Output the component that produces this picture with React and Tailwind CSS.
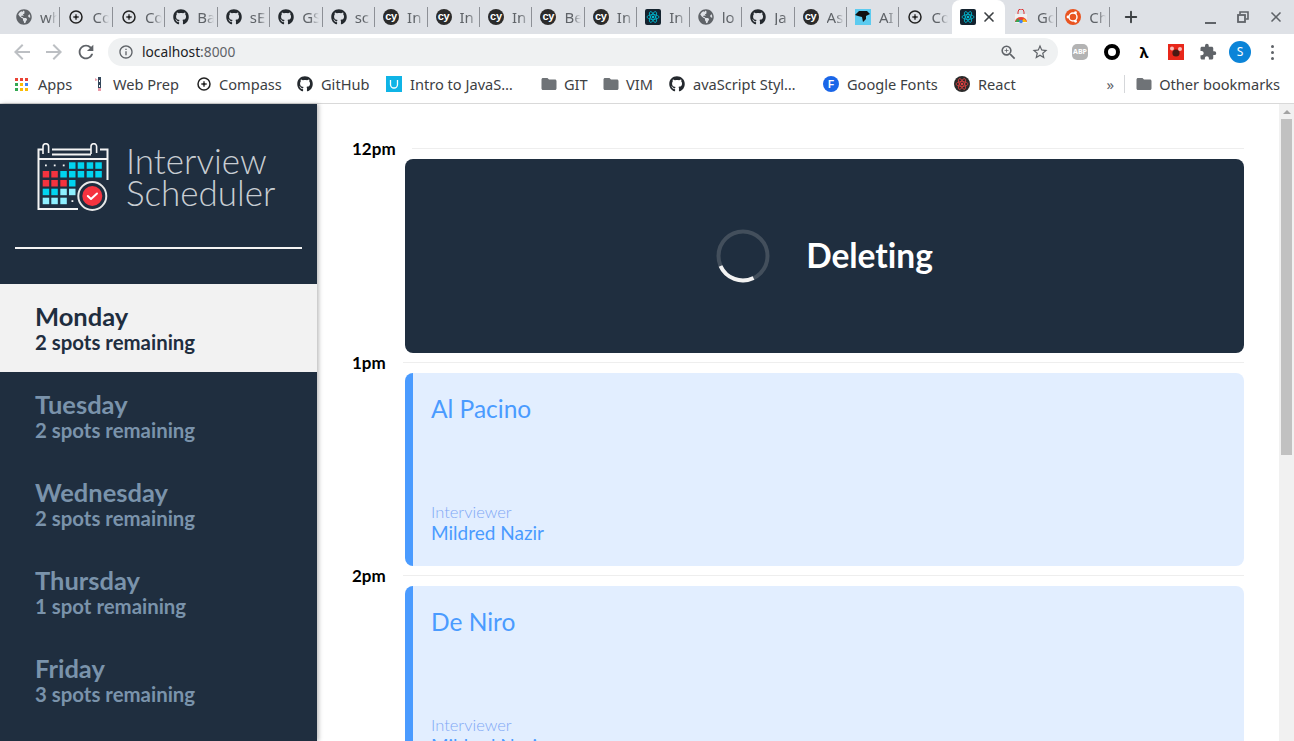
import React from "react";
import { FaGithub, FaGlobeAmericas } from "react-icons/fa";
import { MdArrowBack, MdArrowForward, MdRefresh, MdInfoOutline, MdStarBorder, MdZoomIn, MdExtension, MdFolder } from "react-icons/md";
import { FiX, FiPlus } from "react-icons/fi";

const GlobeIcon = () => <FaGlobeAmericas className="w-4 h-4 text-[#5f6368] shrink-0" />;
const GithubIcon = () => <FaGithub className="w-4 h-4 text-[#24292e] shrink-0" />;
const FolderIcon = () => <MdFolder className="w-[18px] h-[18px] -ml-px -mr-[2px] text-[#6f7377] shrink-0" />;

const CompassIcon = () => (
  <svg viewBox="0 0 16 16" className="w-4 h-4 shrink-0">
    <circle cx="8" cy="8" r="6" fill="none" stroke="#222" strokeWidth="1.5" />
    <path d="M8 5v6M5 8h6" stroke="#222" strokeWidth="1" />
    <circle cx="8" cy="8" r="1.6" fill="#222" />
  </svg>
);

const CypressIcon = () => (
  <span className="w-4 h-4 rounded-full bg-[#2b2b2b] text-white shrink-0 flex items-center justify-center text-[11px] tracking-tight leading-none font-bold font-['Liberation_Sans',sans-serif] pb-[2px]">
    cy
  </span>
);

const ReactIcon = ({ bg = "#14232f", color = "#00bcd4", round = false }) => (
  <svg viewBox="0 0 16 16" className="w-4 h-4 shrink-0">
    <rect width="16" height="16" rx={round ? 8 : 2} fill={bg} />
    <g fill="none" stroke={color} strokeWidth="0.8">
      <ellipse cx="8" cy="8" rx="6" ry="2.4" />
      <ellipse cx="8" cy="8" rx="6" ry="2.4" transform="rotate(60 8 8)" />
      <ellipse cx="8" cy="8" rx="6" ry="2.4" transform="rotate(120 8 8)" />
    </g>
    <circle cx="8" cy="8" r="1.3" fill={color} />
  </svg>
);

const AiIcon = () => (
  <svg viewBox="0 0 16 16" className="w-4 h-4 shrink-0">
    <rect width="16" height="16" fill="#5ccbf0" />
    <path d="M0 6l4-4h8l3 3-4 2v3l-3 3-1-5-4-1z" fill="#111" />
  </svg>
);

const StoreIcon = () => (
  <svg viewBox="0 0 16 16" className="w-4 h-4 shrink-0">
    <path d="M2 5h12v9H2z" fill="#f1f1f1" />
    <path d="M5 5V3a3 3 0 016 0v2" fill="none" stroke="#d33" strokeWidth="1" />
    <path d="M2 13a6 5 0 0112 0z" fill="#ea4335" />
    <path d="M8 13l3-3.5 3 3.5z" fill="#fbbc05" />
    <path d="M2 13l3-3.5 3 3.5z" fill="#34a853" />
    <circle cx="8" cy="12.5" r="1.8" fill="#4285f4" />
  </svg>
);

const UbuntuIcon = () => (
  <svg viewBox="0 0 16 16" className="w-4 h-4 shrink-0">
    <circle cx="8" cy="8" r="8" fill="#e95420" />
    <circle cx="8" cy="8" r="4" fill="none" stroke="#fff" strokeWidth="1.4" />
    <circle cx="3" cy="8" r="1.4" fill="#fff" />
    <circle cx="10.5" cy="3.7" r="1.4" fill="#fff" />
    <circle cx="10.5" cy="12.3" r="1.4" fill="#fff" />
  </svg>
);

const AppsIcon = () => (
  <svg viewBox="0 0 13 13" className="w-[13px] h-[13px] shrink-0">
    {[
      [0, 0, "#ea4335"], [5, 0, "#ea4335"], [10, 0, "#ea4335"],
      [0, 5, "#34a853"], [5, 5, "#fbbc05"], [10, 5, "#4285f4"],
      [0, 10, "#34a853"], [5, 10, "#fbbc05"], [10, 10, "#fbbc05"],
    ].map(([x, y, c]) => (
      <rect key={`${x}-${y}`} x={x} y={y} width="3" height="3" fill={c} />
    ))}
  </svg>
);

const WebPrepIcon = () => (
  <svg viewBox="0 0 16 16" className="w-4 h-4 shrink-0">
    <path d="M7 1h3v14H7z" fill="#33475b" />
    <path d="M8 4h1v2H8zM8 9h1v2H8z" fill="#fff" />
    <path d="M4 2l3 2-3 1z" fill="#e89aa8" />
    <path d="M7 12h3v3H7z" fill="#e89aa8" />
  </svg>
);

const UdemyIcon = () => (
  <svg viewBox="0 0 16 16" className="w-4 h-4 shrink-0">
    <rect width="16" height="16" fill="#0fb4e6" />
    <path d="M4.5 4v4.5a3.5 3.5 0 007 0V4" fill="none" stroke="#fff" strokeWidth="1.3" />
  </svg>
);

const FontsIcon = () => (
  <span className="w-4 h-4 rounded-full bg-[#1a66e8] text-white shrink-0 flex items-center justify-center text-[10px] font-bold font-['Liberation_Sans',sans-serif]">
    F
  </span>
);

const tabs = [
  { icon: <GlobeIcon />, label: "wh" },
  { icon: <CompassIcon />, label: "Co" },
  { icon: <CompassIcon />, label: "Co" },
  { icon: <GithubIcon />, label: "Ba" },
  { icon: <GithubIcon />, label: "sE" },
  { icon: <GithubIcon />, label: "GS" },
  { icon: <GithubIcon />, label: "sc" },
  { icon: <CypressIcon />, label: "In" },
  { icon: <CypressIcon />, label: "In" },
  { icon: <CypressIcon />, label: "In" },
  { icon: <CypressIcon />, label: "Be" },
  { icon: <CypressIcon />, label: "In" },
  { icon: <ReactIcon />, label: "In" },
  { icon: <GlobeIcon />, label: "lo" },
  { icon: <GithubIcon />, label: "Ja" },
  { icon: <CypressIcon />, label: "As" },
  { icon: <AiIcon />, label: "AI" },
  { icon: <CompassIcon />, label: "Co" },
  { icon: <ReactIcon />, label: "", active: true },
  { icon: <StoreIcon />, label: "Go" },
  { icon: <UbuntuIcon />, label: "Ch" },
];

const bookmarks = [
  { icon: <AppsIcon />, label: "Apps", width: "w-[76px]", gap: "gap-[10px]" },
  { icon: <WebPrepIcon />, label: "Web Prep", width: "w-[105px]", gap: "gap-[6px]" },
  { icon: <CompassIcon />, label: "Compass", width: "w-[101px]", gap: "gap-[7px]" },
  { icon: <GithubIcon />, label: "GitHub", width: "w-[89px]", gap: "gap-2" },
  { icon: <UdemyIcon />, label: "Intro to JavaS…", width: "w-[155px]", gap: "gap-2" },
  { icon: <FolderIcon />, label: "GIT", width: "w-[62px]", gap: "gap-2" },
  { icon: <FolderIcon />, label: "VIM", width: "w-[66px]", gap: "gap-2" },
  { icon: <GithubIcon />, label: "avaScript Styl…", width: "w-[154px]", gap: "gap-2" },
  { icon: <FontsIcon />, label: "Google Fonts", width: "w-[131px]", gap: "gap-2" },
  { icon: <ReactIcon bg="#2a2a2a" color="#e04040" round />, label: "React", width: "w-[80px]", gap: "gap-2" },
];

const days = [
  { name: "Monday", spots: "2 spots remaining", selected: true },
  { name: "Tuesday", spots: "2 spots remaining" },
  { name: "Wednesday", spots: "2 spots remaining" },
  { name: "Thursday", spots: "1 spot remaining" },
  { name: "Friday", spots: "3 spots remaining" },
];

const Logo = () => {
  const cols = [5.7, 14.3, 23.3, 32, 40.7, 49.7, 58.3];
  const rows = [19.3, 28, 37, 45.7, 54.7];
  const cells = [
    [null, null, null, "c", "c", "c", "c"],
    ["r", "r", "c", "c", "c", "c", "c"],
    ["r", "r", "r", "c", null, null, null],
    ["c", "c", "l", "l", null, null, null],
    ["l", "l", "l", null, null, null, null],
  ];
  const fills = { c: "#00d4f0", r: "#f5333f", l: "#8ef0ff" };
  return (
    <svg viewBox="0 0 72 68" className="w-[72px] h-[68px] shrink-0">
      <g fill="none" stroke="#f4f4f4" strokeWidth="2">
        <path d="M41 66H1.5V6.5H6M15 6.5H54M63 6.5H70.5V37" />
        <path d="M1.5 16H70.5" />
        <path d="M15 11.5H54" />
        <path d="M6 11V3.5a2.8 2.8 0 015.6 0V10M54 11V3.5a2.8 2.8 0 015.6 0V10" strokeWidth="1.6" />
      </g>
      {cells.map((row, r) =>
        row.map((cell, c) =>
          cell ? <rect key={`${r}-${c}`} x={cols[c]} y={rows[r]} width="6.5" height="6.5" fill={fills[cell]} /> : null
        )
      )}
      <g fill="#f4f4f4">
        <rect x="8" y="21.5" width="1.8" height="1.8" />
        <rect x="16.8" y="21.5" width="1.8" height="1.8" />
        <rect x="25.8" y="21.5" width="1.8" height="1.8" />
        <rect x="34.5" y="57.2" width="1.8" height="1.8" />
      </g>
      <circle cx="55.3" cy="53" r="14" fill="#1f2e3f" stroke="#e8e8e8" strokeWidth="2" />
      <circle cx="55.3" cy="53" r="10" fill="#f5333f" />
      <path d="M50.8 53l3.2 3 6-5.5" fill="none" stroke="#fff" strokeWidth="2" strokeLinecap="round" strokeLinejoin="round" />
    </svg>
  );
};

const Appointment = ({ time, student, interviewer }) => (
  <article className="h-[213px] flex flex-col">
    <div className="flex items-center h-0">
      <span className="w-[53px] text-[17px] font-bold text-black leading-none">{time}</span>
      <div className="flex-1 h-px bg-[#eeeeee] -ml-[2px]" />
    </div>
    <div className="ml-[53px] mt-[11px] h-[193px] rounded-lg bg-[#e2eeff] border-l-[8px] border-[#4a9bff] pl-[18px] pr-4 pt-[20px] flex flex-col text-[#4a9bff]">
      <h2 className="text-[24.5px] leading-[32px] font-normal">{student}</h2>
      <p className="mt-auto text-[16.5px] leading-[18px] font-light text-[#7fa8f5]">Interviewer</p>
      <p className="text-[19px] leading-[24px] mb-[21px]">{interviewer}</p>
    </div>
  </article>
);

const App = () => {
  return (
    <div className="h-screen w-full overflow-hidden flex flex-col font-['Lato',sans-serif] [font-variant-ligatures:none]">
      {/* browser chrome */}
      <header className="shrink-0 font-['Noto_Sans',sans-serif]">
        <div className="h-[34px] bg-[#dee1e6] flex items-center pl-[8px] text-[#5f6368]">
          {tabs.map((tab, i) =>
            tab.active ? (
              <div key={i} className="h-[34px] w-[53px] self-end bg-white rounded-t-lg flex items-center pl-2 gap-[5px]">
                {tab.icon}
                <FiX className="w-4 h-4 text-[#3c4043]" strokeWidth={2.5} />
              </div>
            ) : (
              <div key={i} className={`h-[20px] w-[52.44px] flex items-center pl-2 gap-2 ${i === 17 ? "" : "border-r border-[#8d9096]"}`}>
                {tab.icon}
                <span className="w-[17px] overflow-hidden text-[15px] leading-none [mask-image:linear-gradient(to_right,black_50%,transparent)]">
                  {tab.label}
                </span>
              </div>
            )
          )}
          <FiPlus className="ml-[12px] w-[18px] h-[18px] text-[#3c4043]" strokeWidth={2.5} />
          <div className="ml-auto flex items-center">
            <span className="w-[11px] h-[2px] bg-[#5f6368] mt-3 mr-[21px]" />
            <svg viewBox="0 0 12 12" className="w-3 h-3 mr-[19px]">
              <path d="M3 3V1h8v7H9" fill="none" stroke="#5f6368" strokeWidth="1.6" />
              <rect x="1" y="4" width="7" height="7" fill="none" stroke="#5f6368" strokeWidth="1.8" />
            </svg>
            <FiX className="w-4 h-4 text-[#5f6368] mr-[10px]" strokeWidth={2.5} />
          </div>
        </div>
        <div className="h-[32px] bg-white flex items-center pt-1 pl-[6px]">
          <span className="w-8 flex justify-center"><MdArrowBack className="w-6 h-6 text-[#bcbfc3]" /></span>
          <span className="w-8 flex justify-center"><MdArrowForward className="w-6 h-6 text-[#bcbfc3]" /></span>
          <span className="w-8 flex justify-center"><MdRefresh className="w-[22px] h-[22px] text-[#5f6368]" /></span>
          <div className="ml-[6px] h-[28px] w-[950px] shrink-0 rounded-full bg-[#eff1f2] flex items-center pl-[10px] pr-[9px]">
            <MdInfoOutline className="w-4 h-4 text-[#5f6368]" />
            <span className="ml-2 text-[13.75px] text-[#202124]">
              localhost<span className="text-[#5f6368]">:8000</span>
            </span>
            <MdZoomIn className="ml-auto w-[19px] h-[19px] text-[#5f6368]" />
            <MdStarBorder className="ml-[13px] w-[18px] h-[18px] text-[#5f6368]" />
          </div>
          <div className="ml-[6px] flex items-center">
            <span className="w-8 flex justify-center">
              <span className="w-4 h-4 rounded-[5px] bg-[#b3b3b3] text-white text-[7px] font-bold flex items-center justify-center">ABP</span>
            </span>
            <span className="w-8 flex justify-center">
              <span className="w-4 h-4 rounded-full border-[4px] border-black" />
            </span>
            <span className="w-8 text-center text-[15px] font-bold text-black leading-none">λ</span>
            <span className="w-8 flex justify-center">
              <svg viewBox="0 0 16 16" className="w-4 h-4">
                <rect width="16" height="16" fill="#e8271a" />
                <circle cx="8" cy="9" r="3.6" fill="#4a1a14" />
                <circle cx="4" cy="4.5" r="2" fill="#fff" opacity="0.7" />
                <circle cx="12" cy="5" r="2" fill="#fff" opacity="0.7" />
              </svg>
            </span>
            <span className="w-8 flex justify-center"><MdExtension className="w-[18px] h-[18px] text-[#5f6368]" /></span>
            <span className="w-8 flex justify-center">
              <span className="w-[22px] h-[22px] rounded-full bg-[#0b84d8] text-white text-[12px] flex items-center justify-center">S</span>
            </span>
            <span className="w-8 flex flex-col items-center gap-[3px]">
              <span className="w-[3px] h-[3px] rounded-full bg-[#5f6368]" />
              <span className="w-[3px] h-[3px] rounded-full bg-[#5f6368]" />
              <span className="w-[3px] h-[3px] rounded-full bg-[#5f6368]" />
            </span>
          </div>
        </div>
        <div className="h-[38px] bg-white border-b border-[#d9d9d9] flex items-center pl-[15px] pr-[14px] text-[14.6px] text-[#3c4043]">
          {bookmarks.map((b) => (
            <div key={b.label} className={`flex items-center shrink-0 ${b.width} ${b.gap}`}>
              {b.icon}
              <span className="whitespace-nowrap">{b.label}</span>
            </div>
          ))}
          <div className="ml-auto flex items-center">
            <span className="text-[15px] text-[#5f6368] leading-none">»</span>
            <span className="ml-[10px] w-px h-[18px] bg-[#d5d7da]" />
            <MdFolder className="ml-[10px] w-[18px] h-[18px] text-[#6f7377] shrink-0" />
            <span className="ml-[6px] whitespace-nowrap">Other bookmarks</span>
          </div>
        </div>
      </header>

      <div className="flex-1 min-h-0 flex">
        {/* sidebar */}
        <aside className="w-[317px] shrink-0 bg-[#1f2e3f] flex flex-col shadow-[2px_0_4px_rgba(0,0,0,0.25)] z-10">
          <div className="pl-[37px] pt-[39px] flex items-start">
            <Logo />
            <div className="ml-[17px] mt-[1px] text-[35px] leading-[32px] font-light text-[#c8cdd2]">
              Interview
              <br />
              Scheduler
            </div>
          </div>
          <hr className="mx-[15px] mt-[36px] border-0 h-[2px] bg-[#f4f4f4]" />
          <nav className="mt-[35px]">
            {days.map((day) => (
              <div
                key={day.name}
                className={`h-[88px] pl-[35px] pb-[2px] flex flex-col justify-center ${day.selected ? "bg-[#f2f2f2] text-[#1f2e3f]" : "text-[#7a93ab]"}`}
              >
                <h2 className="text-[25.5px] leading-[30px] font-bold">{day.name}</h2>
                <h3 className="-mt-px text-[20.4px] leading-[24px] font-bold">{day.spots}</h3>
              </div>
            ))}
          </nav>
        </aside>

        {/* schedule */}
        <main className="flex-1 min-w-0 overflow-hidden pt-[44px] pl-[35px] pr-[35px]">
          <article className="h-[214px] flex flex-col">
            <div className="flex items-center h-0">
              <span className="w-[53px] text-[17px] font-bold text-black leading-none">12pm</span>
              <div className="flex-1 h-px bg-[#eeeeee] ml-[7px]" />
            </div>
            <div className="ml-[53px] mt-[11px] h-[194px] rounded-lg bg-[#1f2e3f] flex items-center justify-center gap-[36px] text-white">
              <svg viewBox="0 0 54 54" className="w-[54px] h-[54px]">
                <circle cx="27" cy="27" r="24.5" fill="none" stroke="#434f5c" strokeWidth="4" />
                <path d="M4.5 37a24.5 24.5 0 0033 12" fill="none" stroke="#f2f2f2" strokeWidth="4" />
              </svg>
              <h1 className="text-[33.5px] font-bold leading-none">Deleting</h1>
            </div>
          </article>
          <Appointment time="1pm" student="Al Pacino" interviewer="Mildred Nazir" />
          <Appointment time="2pm" student="De Niro" interviewer="Mildred Nazir" />
        </main>

        {/* page scrollbar */}
        <div className="w-[15px] shrink-0 bg-[#f1f1f1] flex flex-col pt-[6px] pl-[2px]">
          <span className="ml-[2px] w-0 h-0 border-x-[4px] border-x-transparent border-b-[4px] border-b-[#a3a3a3]" />
          <span className="mt-[5px] w-[11px] h-[336px] bg-[#c1c1c1]" />
        </div>
      </div>
    </div>
  );
};

export default App;
